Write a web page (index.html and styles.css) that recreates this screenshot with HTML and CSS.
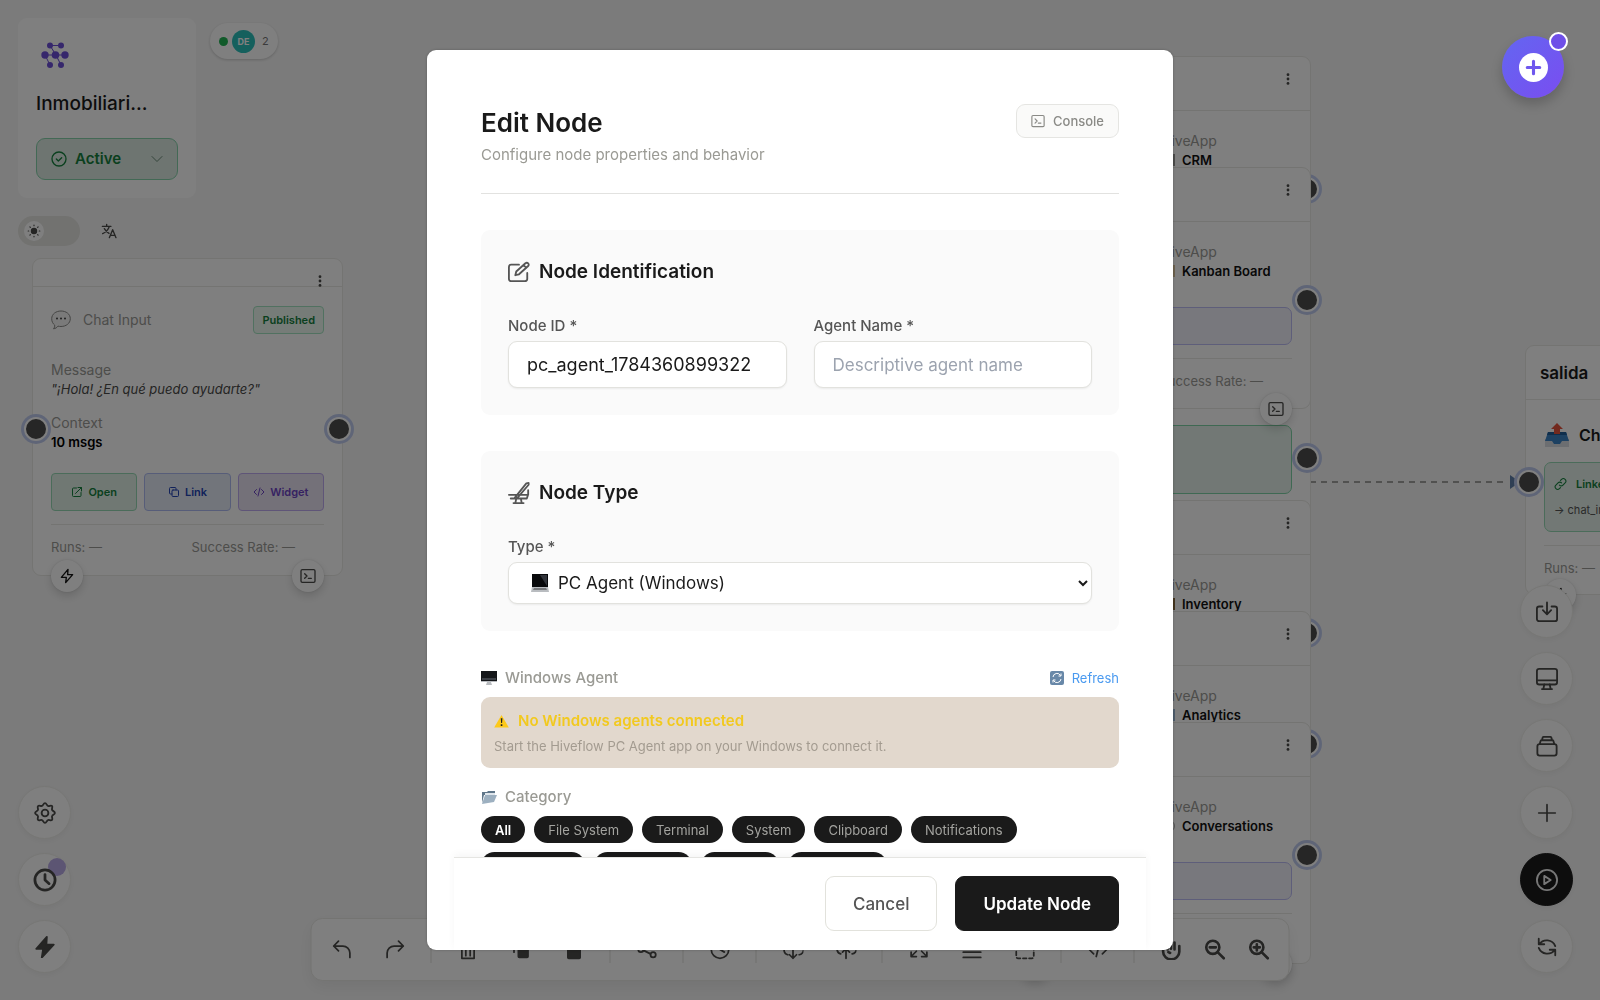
FILE: index.html
```html
<!DOCTYPE html>
<html lang="en">
<head>
  <meta charset="UTF-8">
  <meta name="viewport" content="width=device-width, initial-scale=1.0">
  <title>Hiveflow - Edit Node</title>
  <link rel="stylesheet" href="styles.css">
</head>

<body>
  <!-- shared icons -->
  <svg class="sprite" aria-hidden="true">
    <symbol id="i-dots" viewBox="0 0 16 16"><circle cx="8" cy="3" r="1.6" /><circle cx="8" cy="8" r="1.6" /><circle cx="8" cy="13" r="1.6" /></symbol>
    <symbol id="i-bolt" viewBox="0 0 24 24"><path d="M13.5 2 3.500 14H11l-1 8 10.500-12H13z" /></symbol>
    <symbol id="i-terminal" viewBox="0 0 24 24"><rect x="1.500" y="2.500" width="21" height="19" rx="2" /><path d="m7 8.500 3.500 3.500L7 15.500M12.500 15.500H17" /></symbol>
    <symbol id="i-code" viewBox="0 0 24 24"><path d="m7 7-5 5 5 5M17 7l5 5-5 5M14 4l-4 16" /></symbol>
  </svg>

  <main class="canvas">
    <svg class="edge" viewBox="0 0 210 16" aria-hidden="true">
      <path class="edge-line" d="M0 8h198" />
      <path class="edge-head" d="M200 1v14l10-7z" />
    </svg>

    <article class="node node-chat">
      <header class="node-head short"><button class="dots" aria-label="Node menu"><svg><use href="#i-dots" /></svg></button></header>
      <div class="node-body">
        <div class="node-title">
          <svg class="bubble" viewBox="0 0 20 20" aria-hidden="true"><path d="M10 1c5 0 9.300 3 9.300 7.700S15 16.500 10 16.500c-1 0-2-.1-3-.4-1 1.400-2.500 2.500-4.500 2.700 1-1 1.300-2.300 1.200-3.700C1.800 13.600.7 11.500.7 8.700.7 4 5 1 10 1z" /><circle cx="6" cy="8.500" r="1" /><circle cx="10" cy="8.500" r="1" /><circle cx="14" cy="8.500" r="1" /></svg>
          <span>Chat Input</span>
          <span class="tag">Published</span>
        </div>
        <dl class="facts">
          <dt>Message</dt>
          <dd class="quote">"¡Hola! ¿En qué puedo ayudarte?"</dd>
          <dt>Context</dt>
          <dd>10 msgs</dd>
        </dl>
        <div class="actions">
          <button class="act green"><svg class="ico" viewBox="0 0 24 24"><path d="M11 4H5a2 2 0 0 0-2 2v13a2 2 0 0 0 2 2h13a2 2 0 0 0 2-2v-6M9 15 21 3M14 3h7v7" /></svg>Open</button>
          <button class="act blue"><svg class="ico" viewBox="0 0 24 24"><rect x="8" y="8" width="13" height="13" rx="2" /><path d="M16 8V5a2 2 0 0 0-2-2H5a2 2 0 0 0-2 2v9a2 2 0 0 0 2 2h3" /></svg>Link</button>
          <button class="act purple"><svg class="ico"><use href="#i-code" /></svg>Widget</button>
        </div>
        <div class="stats"><span>Runs: —</span><span>Success Rate: —</span></div>
      </div>
      <span class="handle in"></span><span class="handle out"></span>
      <button class="round run" aria-label="Run"><svg class="ico"><use href="#i-bolt" /></svg></button>
      <button class="round log" aria-label="Console"><svg class="ico"><use href="#i-terminal" /></svg></button>
    </article>

    <article class="node app node-agent">
      <header class="node-head"></header>
      <div class="node-body"><div class="linked-box"></div></div>
      <span class="handle out"></span>
    </article>

    <article class="node app node-crm">
      <header class="node-head"><button class="dots" aria-label="Node menu"><svg><use href="#i-dots" /></svg></button></header>
      <div class="node-body">
        <div class="app-info"><span>HiveApp</span><strong><i class="swatch people"></i>CRM</strong></div>
        <div class="app-link"></div>
      </div>
      <span class="handle out"></span>
    </article>

    <article class="node app node-kanban">
      <header class="node-head"><button class="dots" aria-label="Node menu"><svg><use href="#i-dots" /></svg></button></header>
      <div class="node-body">
        <div class="app-info"><span>HiveApp</span><strong><i class="swatch board"></i>Kanban Board</strong></div>
        <div class="app-link"></div>
        <div class="stats"><span>Runs: —</span><span>Success Rate: —</span></div>
      </div>
      <span class="handle out"></span>
      <button class="round log" aria-label="Console"><svg class="ico"><use href="#i-terminal" /></svg></button>
    </article>

    <article class="node app node-inventory">
      <header class="node-head"><button class="dots" aria-label="Node menu"><svg><use href="#i-dots" /></svg></button></header>
      <div class="node-body">
        <div class="app-info"><span>HiveApp</span><strong><i class="swatch box"></i>Inventory</strong></div>
        <div class="app-link"></div>
      </div>
      <span class="handle out"></span>
    </article>

    <article class="node app node-analytics">
      <header class="node-head"><button class="dots" aria-label="Node menu"><svg><use href="#i-dots" /></svg></button></header>
      <div class="node-body">
        <div class="app-info"><span>HiveApp</span><strong><i class="swatch chart"></i>Analytics</strong></div>
        <div class="app-link"></div>
      </div>
      <span class="handle out"></span>
    </article>

    <article class="node app node-conversations">
      <header class="node-head"><button class="dots" aria-label="Node menu"><svg><use href="#i-dots" /></svg></button></header>
      <div class="node-body">
        <div class="app-info"><span>HiveApp</span><strong><i class="swatch talk"></i>Conversations</strong></div>
        <div class="app-link"></div>
        <div class="stats"></div>
      </div>
      <span class="handle out"></span>
      <span class="round log"></span>
      <span class="round run"></span>
    </article>

    <article class="node node-output">
      <header class="node-head"><h3>salida</h3></header>
      <div class="node-body">
        <div class="output-title">
          <svg viewBox="0 0 26 26" aria-hidden="true"><path fill="#d9dde2" d="M1 17h24v8H1z" /><path fill="#3b82c4" d="m4 10h18l3 9h-7l-2 3h-6l-2-3H1z" /><path fill="#1f5d99" d="M4 10h18l1 3H3z" /><path fill="#e5533d" d="m13 1 6 6h-3v5h-6V7H7z" /></svg>
          <strong>Chat Output</strong>
        </div>
        <div class="linked">
          <span class="linked-title"><svg class="ico" viewBox="0 0 24 24"><path d="M10 14a4.500 4.500 0 0 0 6.500 0l4-4A4.500 4.500 0 0 0 14 3.500l-2 2M14 10a4.500 4.500 0 0 0-6.500 0l-4 4A4.500 4.500 0 0 0 10 20.500l2-2" /></svg>Linked</span>
          <span>→ chat_input</span>
        </div>
        <div class="stats"><span>Runs: —</span></div>
      </div>
      <span class="handle in"></span>
      <button class="round run" aria-label="Run"><svg class="ico"><use href="#i-bolt" /></svg></button>
    </article>
  </main>

  <aside class="sidebar">
    <section class="flow-card">
      <svg class="logo" viewBox="0 0 28 28" aria-hidden="true"><path d="M9 4.500h11M9 4.500l6 9.500 5 10M4 14h20M4 14l5 10" /><circle cx="9" cy="4.500" r="3" /><circle cx="20" cy="4.500" r="3" /><circle cx="4" cy="14" r="3.700" /><circle cx="14.500" cy="14" r="3.800" /><circle cx="24" cy="14" r="3.700" /><circle cx="9" cy="24" r="3" /><circle cx="20" cy="24" r="3" /></svg>
      <h2>Inmobiliari...</h2>
      <button class="status">
        <svg class="ico" viewBox="0 0 24 24"><circle cx="12" cy="12" r="10.500" /><path d="m8 12 3 3 5-5" /></svg>
        <span>Active</span>
        <svg class="ico chev" viewBox="0 0 24 24"><path d="m2 7 10 10L22 7" /></svg>
      </button>
    </section>
    <div class="prefs">
      <button class="theme" aria-label="Toggle theme"><span><svg class="ico" viewBox="0 0 24 24"><circle class="fill" cx="12" cy="12" r="4.500" /><path d="M12 2v1M12 21v1M2 12h1M21 12h1M5 5l.7.7M18.300 18.300l.7.7M5 19l.7-.7M18.300 5.700 19 5" /></svg></span></button>
      <button class="lang" aria-label="Language"><svg class="ico" viewBox="0 0 24 24"><path d="M2 5h13M8.500 2v3M12.500 5C11 10 7 14 2.500 16M5 8.500c2 3.500 4 5.500 7 7M12.500 22l5-12 5 12M14 18.500h7" /></svg></button>
    </div>
  </aside>

  <div class="presence"><i></i><b>DE</b><span>2</span></div>

  <nav class="rail left">
    <button aria-label="Settings"><svg class="ico" viewBox="0 0 24 24"><circle cx="12" cy="12" r="3.700" /><path d="M12 1.200c1.800 0 1.900 2.600 3.300 3.100 1.400.6 3.100-1.200 4.300 0s-.5 2.900.1 4.300c.5 1.400 3.100 1.600 3.100 3.400s-2.600 1.900-3.100 3.300c-.6 1.400 1.200 3.100-.1 4.300-1.200 1.300-2.900-.5-4.300.1-1.400.5-1.500 3.100-3.300 3.100s-1.900-2.600-3.300-3.100c-1.400-.6-3.100 1.200-4.300-.1-1.200-1.200.5-2.900-.1-4.300C3.800 13.900 1.200 13.800 1.200 12s2.600-1.900 3.100-3.300c.6-1.400-1.100-3.100.1-4.300s2.900.4 4.300-.1C10.100 3.800 10.200 1.200 12 1.200z" /></svg></button>
    <button class="history" aria-label="History"><svg class="ico" viewBox="0 0 24 24"><circle cx="12" cy="12" r="11" /><path d="M12 6v6l4.500 4" /></svg></button>
    <button class="solid" aria-label="Triggers"><svg class="ico" viewBox="0 0 24 24"><path d="M14 1 2.500 14H10l-1.500 9.500L21.500 9.500H13.500z" /></svg></button>
  </nav>

  <nav class="rail right">
    <button aria-label="Import"><svg class="ico" viewBox="0 0 24 24"><path d="M7 6H3.500A2.500 2.500 0 0 0 1 8.500v11A2.500 2.500 0 0 0 3.500 22h17a2.500 2.500 0 0 0 2.500-2.500v-11A2.500 2.500 0 0 0 20.500 6H17M12 1.500V14M7.500 10l4.500 4.500 4.500-4.500" /></svg></button>
    <button aria-label="Desktop"><svg class="ico" viewBox="0 0 24 24"><rect x="1" y="1" width="22" height="17" rx="2.500" /><path d="M1 13.500h22M9 18l-1 5M15 18l1 5M6.500 23h11" /></svg></button>
    <button aria-label="Library"><svg class="ico" viewBox="0 0 24 24"><rect x="1.500" y="10" width="21" height="12.500" rx="2.500" /><path d="M4 10l1-3.500q.3-.8 1-.8h12q.7 0 1 .8l1 3.500M6.500 5.500l.8-2.700q.3-.8 1-.8h7.400q.7 0 1 .8l.8 2.700" /></svg></button>
    <button class="thin" aria-label="Add node"><svg class="ico" viewBox="0 0 24 24"><path d="M12 2v20M2 12h20" /></svg></button>
    <button class="dark" aria-label="Run flow"><svg class="ico" viewBox="0 0 24 24"><circle cx="12" cy="12" r="11" /><path d="M9 7.500v9l7-4.500z" /></svg></button>
    <button aria-label="Sync"><svg class="ico" viewBox="0 0 24 24"><path d="M3 3v6h6M3.500 9A10 10 0 0 1 21 11M21 21v-6h-6M20.500 15A10 10 0 0 1 3 13" /></svg></button>
  </nav>

  <div class="toolbar">
    <button aria-label="Undo"><svg class="ico" viewBox="0 0 24 24"><path d="M8 2.500 2.500 8 8 13.500M2.500 8H13a8 8 0 0 1 8 8v5" /></svg></button>
    <button aria-label="Redo"><svg class="ico" viewBox="0 0 24 24"><path d="M16 2.500 21.500 8 16 13.500M21.500 8H11a8 8 0 0 0-8 8v5" /></svg></button>
    <hr>
    <button aria-label="Delete"><svg class="ico" viewBox="0 0 24 24"><path d="M3 6h18M8 6V3h8v3M5 8v14h14V8M9.500 11v8M14.500 11v8" /></svg></button>
    <button aria-label="Copy"><svg class="ico" viewBox="0 0 24 24"><rect class="fill" x="9" y="9" width="11" height="12" rx="1" /><path d="M4 15V4h11" /></svg></button>
    <button aria-label="Paste"><svg class="ico" viewBox="0 0 24 24"><rect class="fill" x="5" y="5" width="14" height="17" rx="1" /><path d="M9 3h6" /></svg></button>
    <hr>
    <button aria-label="Share"><svg class="ico" viewBox="0 0 24 24"><circle cx="5" cy="12" r="3" /><circle cx="19" cy="5" r="3" /><circle cx="19" cy="18" r="3" /><path d="m8 11 8-4M8 13l8 4" /></svg></button>
    <hr>
    <button aria-label="Versions"><svg class="ico" viewBox="0 0 24 24"><circle cx="12" cy="12" r="10" /><path d="M12 5v7l5 3" /></svg></button>
    <hr>
    <button aria-label="Download"><svg class="ico" viewBox="0 0 24 24"><path d="M6 18a5 5 0 0 1-2-9 7 7 0 0 1 14-2 5.500 5.500 0 0 1 1 11M12 9v13M8 18l4 4 4-4" /></svg></button>
    <button aria-label="Upload"><svg class="ico" viewBox="0 0 24 24"><path d="M6 17a5 5 0 0 1-2-9 7 7 0 0 1 14-2 5.500 5.500 0 0 1 1 11M12 22V11M8 15l4-4 4 4" /></svg></button>
    <hr>
    <button aria-label="Fit view"><svg class="ico" viewBox="0 0 24 24"><path d="M3 9V4h6M3 4l6 6M21 9V4h-6M21 4l-6 6M3 15v5h6M3 20l6-6M21 15v5h-6M21 20l-6-6" /></svg></button>
    <button aria-label="Align"><svg class="ico" viewBox="0 0 24 24"><path d="M2 9h20M2 15h20M2 21h20" /></svg></button>
    <button aria-label="Select area"><svg class="ico" viewBox="0 0 24 24"><rect x="2" y="4" width="20" height="18" rx="2" stroke-dasharray="4 3" /></svg></button>
    <hr>
    <button aria-label="Code"><svg class="ico"><use href="#i-code" /></svg></button>
    <hr>
    <div class="zoom">
      <button aria-label="Pan"><svg class="ico" viewBox="0 0 24 24"><path d="M3 12v2.500a9 8.500 0 0 0 18.500 0V8M3 12V6M8 12V4M12 11V3M16 12V4M9 15l2 1" /></svg></button>
      <button aria-label="Zoom out"><svg class="ico" viewBox="0 0 24 24"><circle cx="9.500" cy="9.500" r="7.500" /><path d="m15 15 7 7M6 9.500h7" /></svg></button>
      <button aria-label="Zoom in"><svg class="ico" viewBox="0 0 24 24"><circle cx="9.500" cy="9.500" r="7.500" /><path d="m15 15 7 7M6 9.500h7M9.500 6v7" /></svg></button>
    </div>
  </div>

  <div class="backdrop">
    <form class="modal" role="dialog" aria-labelledby="modal-title">
      <div class="modal-body">
        <header class="modal-head">
          <div>
            <h1 id="modal-title">Edit Node</h1>
            <p>Configure node properties and behavior</p>
          </div>
          <button type="button" class="console"><svg class="ico"><use href="#i-terminal" /></svg>Console</button>
        </header>

        <section class="panel">
          <h2><svg class="ico" viewBox="0 0 24 24"><path d="M12 4H3.500A2.500 2.500 0 0 0 1 6.500v13A2.500 2.500 0 0 0 3.500 22h15a2.500 2.500 0 0 0 2.500-2.500V13M19 2.500a2 2 0 0 1 3 3L12 14.500l-4 1 1-4zM17 4.500l3 3" /></svg>Node Identification</h2>
          <div class="fields">
            <div class="field">
              <label for="node-id">Node ID *</label>
              <input type="text" id="node-id" value="pc_agent_1784360899322">
            </div>
            <div class="field">
              <label for="agent-name">Agent Name *</label>
              <input type="text" id="agent-name" placeholder="Descriptive agent name">
            </div>
          </div>
        </section>

        <section class="panel">
          <h2><svg class="ico" viewBox="0 0 24 24"><path d="M1 14h12M3 18h17.500l1.500-4.500V9M20 1.500 7.500 17h3L22.500 3V1zM9 18l-1 5M14 18l1 5M6 23h11M13 14h9" /></svg>Node Type</h2>
          <div class="field">
            <label for="node-type">Type *</label>
            <div class="select-wrap">
              <select id="node-type"><option>PC Agent (Windows)</option></select>
              <svg class="laptop" viewBox="0 0 18 18" aria-hidden="true"><path fill="#b9bcc0" d="M1 1h16v12H1zM1 13h16l1 5H0z" /><path fill="#08090b" d="M1 0h16v13H1z" /><path fill="#31343a" d="M16 1v11L9 1z" /><path fill="#77797c" d="M3 14h12l1 2H2z" /></svg>
            </div>
          </div>
        </section>

        <section class="agent">
          <div class="row">
            <h3><svg viewBox="0 0 16 16" aria-hidden="true"><path fill="#b8bbbf" d="M0 10h16v2H0zM6 12h4l1 3H5z" /><path fill="#15171a" d="M0 1h16v10H0z" /><path fill="#3d4147" d="M1 8h14v2H1z" /></svg>Windows Agent</h3>
            <button type="button" class="refresh"><svg viewBox="0 0 14 14" aria-hidden="true"><rect width="14" height="14" rx="2" fill="#6888a8" /><path d="M3 6a4 4 0 0 1 7.500-1.500M11 8a4 4 0 0 1-7.500 1.500M11 2.500V5H8.500M3 11.500V9h2.500" /></svg>Refresh</button>
          </div>
          <div class="warning">
            <strong><svg viewBox="0 0 16 14" aria-hidden="true"><path fill="#fdc91a" d="M8 0.500 15.800 14H.2z" /><path fill="#222" d="M7.200 4h1.800l-.4 5h-1zM7.200 10.500h1.700v1.700H7.200z" /></svg>No Windows agents connected</strong>
            <p>Start the Hiveflow PC Agent app on your Windows to connect it.</p>
          </div>
        </section>

        <section class="category">
          <h3><svg viewBox="0 0 16 16" aria-hidden="true"><path fill="#5f7689" d="M1 3h5l1-1h7v4H3L1 14z" /><path fill="#dfe6ec" d="M4 4h10v5H4z" /><path fill="#9db0c0" d="M4 6h12l-3 7-12 2z" /></svg>Category</h3>
          <div class="chips">
            <button type="button" class="chip on">All</button>
            <button type="button" class="chip">File System</button>
            <button type="button" class="chip">Terminal</button>
            <button type="button" class="chip">System</button>
            <button type="button" class="chip">Clipboard</button>
            <button type="button" class="chip">Notifications</button>
            <button type="button" class="chip">Applications</button>
            <button type="button" class="chip">Screenshot</button>
            <button type="button" class="chip">Browser</button>
            <button type="button" class="chip">Automation</button>
          </div>
        </section>
      </div>

      <footer class="modal-foot">
        <button type="button" class="cancel">Cancel</button>
        <button type="submit" class="update">Update Node</button>
      </footer>
    </form>
  </div>

  <button class="fab" aria-label="Open assistant"><svg viewBox="0 0 28 28"><circle cx="14" cy="14" r="14" /><path d="M14 8v12M8 14h12" /></svg></button>
</body>
</html>
```

FILE: styles.css
```css
* {
  margin: 0;
  padding: 0;
  box-sizing: border-box;
}

body {
  height: 100vh;
  overflow: hidden;
  background: #f7f7f7;
  color: #1a1a1a;
  font-family: Inter, sans-serif;
  font-size: 13px;
  line-height: 18px;
}

button, input, select {
  font: inherit;
  color: inherit;
}

button {
  border: none;
  background: none;
  cursor: pointer;
}

.sprite {
  position: absolute;
  width: 0;
  height: 0;
}

.ico {
  width: 16px;
  height: 16px;
  flex: none;
  fill: none;
  stroke: currentColor;
  stroke-width: 2;
  stroke-linecap: round;
  stroke-linejoin: round;
}

.fill {
  fill: currentColor;
}

/* Canvas */
.canvas {
  position: absolute;
  inset: 0;
  overflow: hidden;
}

.edge {
  position: absolute;
  left: 1310px;
  top: 474px;
  width: 210px;
  height: 16px;
}

.edge-line {
  stroke: #a2a2a0;
  stroke-width: 2;
  stroke-dasharray: 6 5;
}

.edge-head {
  fill: #5f7fa8;
}

.node {
  position: absolute;
  width: 311px;
  background: #fff;
  border: 1px solid #e8e8e4;
  border-radius: 9px;
}

.node-chat { left: 32px; top: 258px; height: 318px; }
.node-agent { left: 1000px; top: 280px; height: 340px; }
.node-crm { left: 1000px; top: 56px; height: 242px; }
.node-kanban { left: 1000px; top: 167px; height: 242px; }
.node-inventory { left: 1000px; top: 500px; height: 242px; }
.node-analytics { left: 1000px; top: 611px; height: 242px; }
.node-conversations { left: 1000px; top: 722px; height: 242px; }
.node-output { left: 1525px; top: 345px; height: 250px; }

.node-head {
  display: flex;
  align-items: center;
  justify-content: space-between;
  height: 54px;
  padding: 0 14px;
  border-bottom: 1px solid #e8e8e4;
}

.app .node-head {
  padding-bottom: 8px;
}

.node-head.short {
  height: 28px;
  padding-top: 18px;
}

.node-head h3 {
  font-size: 17px;
  font-weight: 600;
}

.dots {
  width: 16px;
  height: 16px;
  margin-left: auto;
}

.dots svg {
  width: 16px;
  height: 14px;
  fill: #4a4a48;
}

.node-body {
  padding: 20px 18px;
}

.node-chat .node-body {
  padding-top: 19px;
}

.node-title {
  display: flex;
  align-items: center;
  gap: 12px;
  color: #9a9a96;
  font-size: 14px;
}

.bubble {
  width: 20px;
  height: 20px;
  fill: #f4f4f4;
  stroke: #8a8a88;
}

.bubble circle {
  fill: #444;
  stroke: none;
}

.tag {
  margin-left: auto;
  padding: 4px 8px;
  border: 1px solid #a3e3c0;
  border-radius: 4px;
  background: #ecf8f1;
  color: #15803d;
  font-size: 11px;
  font-weight: 600;
}

.facts {
  margin-top: 27px;
}

.facts dt {
  color: #9a9a96;
  font-size: 14px;
}

.facts dd {
  margin: 1px 0 16px;
  color: #000;
  font-weight: 600;
}

.facts .quote {
  color: #4a4a48;
  font-style: italic;
  font-weight: 400;
}

.actions {
  display: flex;
  gap: 7px;
  margin-top: 22px;
}

.act {
  display: flex;
  flex: 1;
  align-items: center;
  justify-content: center;
  gap: 5px;
  height: 38px;
  border: 1px solid;
  border-radius: 4px;
  font-size: 11px;
  font-weight: 600;
}

.act .ico {
  width: 12px;
  height: 12px;
}

.act.green { background: #e0f1e7; border-color: #96d9b4; color: #15803d; }
.act.blue { background: #e4eaf6; border-color: #aebbf3; color: #2444b5; }
.act.purple { background: #e8e2f3; border-color: #bfaaf0; color: #6d44c4; }

.stats {
  display: grid;
  grid-template-columns: 1fr 1fr;
  gap: 8px;
  margin-top: 13px;
  padding-top: 13px;
  border-top: 1px solid #e8e8e4;
  color: #9a9a96;
}

.handle {
  position: absolute;
  width: 24px;
  height: 24px;
  border: 2px solid #fff;
  border-radius: 50%;
  background: #4d4d4d;
  box-shadow: 0 0 0 3px #bfcbee;
}

.handle.in { left: -9px; }
.handle.out { right: -9px; }
.app .handle { top: 120px; }
.app.node-agent .handle { top: 165px; }
.node-chat .handle { top: 158px; }
.node-output .handle { top: 124px; }

.round {
  position: absolute;
  bottom: -17px;
  display: grid;
  place-items: center;
  width: 32px;
  height: 32px;
  border-radius: 50%;
  background: #fff;
  box-shadow: 0 4px 10px #00000026, 0 0 2px #00000022;
}

.round.run { left: 18px; color: #111; }
.round.log { right: 18px; color: #4a4a48; }

/* HiveApp nodes */
.app-info {
  display: grid;
  justify-items: start;
  padding: 1px 0 0 142px;
  color: #9a9a96;
  font-size: 14px;
}

.app-info strong {
  display: flex;
  align-items: center;
  gap: 7px;
  color: #111;
  font-size: 13px;
  font-weight: 600;
  line-height: 20px;
}

.swatch {
  width: 14px;
  height: 12px;
}

.people { background: #9a9a98; }
.board { background: #d9c49c; }
.box { background: #8a6a3c; }
.chart { background: #9dbbd9; }
.talk { border: 1px solid #aaa; border-radius: 6px; }

.app-link {
  height: 38px;
  margin-top: 26px;
  border: 1px solid #bcbcf5;
  border-radius: 7px;
  background: #f0f0fa;
}

.linked-box {
  height: 69px;
  margin-top: 70px;
  border: 1px solid #7fd2a6;
  border-radius: 7px;
  background: #e4f1ea;
}

.output-title {
  display: flex;
  align-items: center;
  gap: 9px;
  padding-top: 2px;
  font-size: 16px;
}

.output-title strong {
  font-weight: 600;
}

.output-title svg {
  width: 26px;
  height: 26px;
}

.linked {
  display: grid;
  gap: 8px;
  margin-top: 14px;
  padding: 12px 9px;
  border: 1px solid #96d9b4;
  border-radius: 7px;
  background: #e4f1ea;
  color: #555;
  font-size: 11px;
}

.linked-title {
  display: flex;
  align-items: center;
  gap: 9px;
  color: #15803d;
  font-weight: 600;
}

.linked-title .ico {
  width: 13px;
}

/* Floating chrome */
.sidebar {
  position: absolute;
  left: 18px;
  top: 18px;
  width: 178px;
}

.flow-card {
  padding: 23px 18px 18px;
  border-radius: 9px;
  background: #fff;
}

.logo {
  display: block;
  width: 28px;
  height: 28px;
  margin-left: 5px;
  fill: #6d4fd8;
  stroke: #6d4fd8;
}

.logo circle {
  stroke: none;
}

.flow-card h2 {
  margin: 22px 0 21px;
  font-size: 19px;
  font-weight: 500;
  line-height: 26px;
}

.status {
  display: flex;
  align-items: center;
  gap: 8px;
  width: 100%;
  height: 42px;
  padding: 0 14px;
  border: 1px solid #86d3ab;
  border-radius: 9px;
  background: #dceae2;
  color: #15803d;
  font-size: 15px;
  font-weight: 600;
}

.status .chev {
  width: 12px;
  margin-left: auto;
  color: #6b8a78;
}

.prefs {
  display: flex;
  align-items: center;
  gap: 21px;
  margin-top: 18px;
}

.theme {
  width: 62px;
  height: 30px;
  padding: 5px 6px;
  border-radius: 15px;
  background: #e4e4e0;
}

.theme span {
  display: grid;
  place-items: center;
  width: 20px;
  height: 20px;
  border-radius: 50%;
  background: #fff;
  color: #4a4a48;
}

.theme .ico {
  width: 14px;
  height: 14px;
}

.lang {
  display: flex;
  color: #4a4a48;
}

.presence {
  position: absolute;
  left: 210px;
  top: 23px;
  display: flex;
  align-items: center;
  gap: 4px;
  height: 36px;
  padding: 0 9px;
  border-radius: 18px;
  background: #fff;
  box-shadow: 0 1px 3px #00000030;
  color: #777;
  font-size: 11px;
}

.presence i {
  width: 9px;
  height: 9px;
  border-radius: 50%;
  background: #22b455;
}

.presence b {
  width: 23px;
  margin-right: 3px;
  border-radius: 50%;
  background: #2ac0bb;
  color: #fff;
  font-size: 9px;
  line-height: 23px;
  text-align: center;
}

.rail {
  position: absolute;
  bottom: 27px;
  display: grid;
  gap: 14px;
}

.rail.left { left: 18px; }
.rail.right { right: 27px; }

.rail button {
  position: relative;
  display: grid;
  place-items: center;
  width: 53px;
  height: 53px;
  border: 1px solid #eeeeea;
  border-radius: 50%;
  background: #fff;
  box-shadow: 0 2px 6px #0000000c;
  color: #4a4a48;
}

.rail .ico {
  width: 22px;
  height: 22px;
}

.rail .solid .ico {
  fill: currentColor;
}

.rail .thin .ico {
  width: 20px;
}

.rail .dark {
  border-color: #1a1a1a;
  background: #1a1a1a;
  color: #eee;
}

.history::before {
  content: "";
  position: absolute;
  right: 4px;
  top: 4px;
  width: 18px;
  height: 18px;
  border-radius: 50%;
  background: #b9abe6;
}

.rail .history .ico {
  position: relative;
  stroke-width: 3;
  overflow: visible;
}

.toolbar {
  position: absolute;
  left: 50%;
  bottom: 19px;
  display: flex;
  align-items: center;
  gap: 9px;
  height: 63px;
  padding: 0 8px;
  border: 1px solid #e8e8e4;
  border-radius: 12px;
  background: #fff;
  box-shadow: 0 6px 16px #00000010;
  color: #4a4a48;
  transform: translateX(-50%);
}

.toolbar button {
  display: grid;
  place-items: center;
  width: 44px;
  height: 44px;
}

.toolbar .ico {
  width: 21px;
  height: 21px;
}

.toolbar hr {
  width: 1px;
  height: 27px;
  margin: 0 5px;
  border: none;
  background: #e0e0dc;
}

.zoom {
  display: flex;
}

.zoom .ico {
  stroke-width: 3;
}

.fab {
  position: absolute;
  right: 36px;
  top: 36px;
  display: grid;
  place-items: center;
  width: 62px;
  height: 62px;
  border-radius: 50%;
  background: linear-gradient(135deg, #6366f1, #7a4df0);
  box-shadow: 0 6px 12px #0003;
}

.fab svg {
  width: 29px;
  height: 29px;
  fill: #fff;
}

.fab path {
  stroke: #6f57ee;
  stroke-width: 3;
  stroke-linecap: round;
}

.fab::after {
  content: "";
  position: absolute;
  right: -4px;
  top: -4px;
  width: 15px;
  height: 15px;
  border: 2px solid #fff;
  border-radius: 50%;
  background: #6f4fe8;
}

/* Modal */
.backdrop {
  position: fixed;
  inset: 0;
  display: grid;
  place-items: center;
  background: rgba(0, 0, 0, 0.5);
}

.modal {
  display: flex;
  flex-direction: column;
  width: 90%;
  max-width: 746px;
  height: 90vh;
  border-radius: 9px;
  background: #fff;
  box-shadow: 0 0 3px #00000040;
  overflow: hidden;
}

.modal-body {
  flex: 1;
  min-height: 0;
  padding: 54px 54px 0;
  overflow: hidden;
}

.modal-head {
  display: flex;
  align-items: flex-start;
  justify-content: space-between;
  padding-bottom: 27px;
  border-bottom: 1px solid #e2e2e0;
}

.modal-head h1 {
  font-size: 26px;
  font-weight: 600;
  line-height: 37px;
}

.modal-head p {
  margin-top: 3px;
  color: #9a9a94;
  font-size: 15px;
  line-height: 22px;
}

.console {
  display: flex;
  align-items: center;
  gap: 8px;
  height: 34px;
  padding: 0 14px;
  border: 1px solid #e5e5e2;
  border-radius: 9px;
  background: #fafaf9;
  color: #8a8a86;
  font-weight: 500;
}

.console .ico {
  width: 14px;
  height: 14px;
}

.panel {
  margin-top: 36px;
  padding: 27px;
  border-radius: 9px;
  background: #fafafa;
}

.panel h2 {
  display: flex;
  align-items: center;
  gap: 9px;
  margin-bottom: 27px;
  font-size: 19px;
  font-weight: 600;
  line-height: 30px;
}

.panel h2 .ico {
  width: 22px;
  height: 22px;
  color: #555;
}

.fields {
  display: grid;
  grid-template-columns: 1fr 1fr;
  gap: 27px;
}

.field label {
  display: block;
  margin-bottom: 4px;
  color: #555;
  font-size: 15px;
  font-weight: 500;
  line-height: 23px;
}

.field input, .field select {
  width: 100%;
  height: 47px;
  padding: 0 18px;
  border: 1px solid #e2e2de;
  border-radius: 9px;
  background: #fff;
  box-shadow: 0 1px 2px #00000010;
  font-size: 18px;
}

.field input::placeholder {
  color: #9ca3af;
  font-size: 17px;
}

.select-wrap {
  position: relative;
}

.field select {
  height: 42px;
  padding: 0 0 0 45px;
  font-size: 17px;
}

.laptop {
  position: absolute;
  left: 23px;
  top: 12px;
  width: 18px;
  height: 18px;
}

.agent {
  margin-top: 36px;
}

.row {
  display: flex;
  align-items: center;
  justify-content: space-between;
}

.agent h3, .category h3 {
  display: flex;
  align-items: center;
  gap: 8px;
  color: #9a9a94;
  font-size: 15px;
  font-weight: 500;
  line-height: 22px;
}

.agent h3 svg, .category h3 svg {
  width: 16px;
  height: 16px;
}

.refresh {
  display: flex;
  align-items: center;
  gap: 8px;
  color: #4a9af0;
}

.refresh svg {
  width: 14px;
  height: 14px;
}

.refresh path {
  fill: none;
  stroke: #fff;
}

.warning {
  margin-top: 8px;
  padding: 13px;
  border-radius: 9px;
  background: #e2d8cd;
  color: #a39b90;
}

.warning strong {
  display: flex;
  align-items: center;
  gap: 9px;
  color: #f2c91f;
  font-size: 15px;
  font-weight: 600;
  line-height: 22px;
}

.warning strong svg {
  width: 15px;
  height: 14px;
}

.warning p {
  margin-top: 5px;
}

.category {
  margin-top: 18px;
}

.chips {
  display: flex;
  flex-wrap: wrap;
  gap: 9px;
  margin-top: 8px;
}

.chip {
  height: 27px;
  padding: 0 14px;
  border-radius: 14px;
  background: #1a1a1a;
  color: #a3a39f;
}

.chip.on {
  color: #fff;
  font-weight: 600;
}

.modal-foot {
  position: relative;
  display: flex;
  justify-content: flex-end;
  gap: 18px;
  margin: 0 27px;
  padding: 18px 27px 19px;
  border-top: 1px solid #e5e5e2;
  background: #fff;
  box-shadow: 0 -3px 8px #0000000a;
}

.modal-foot button {
  height: 55px;
  padding: 0 27px;
  border: 1px solid #e2e2dc;
  border-radius: 9px;
  color: #555;
  font-size: 17px;
  font-weight: 500;
}

.modal-foot .update {
  border-color: #1a1a1a;
  background: #1a1a1a;
  color: #fff;
  font-weight: 600;
}
```
